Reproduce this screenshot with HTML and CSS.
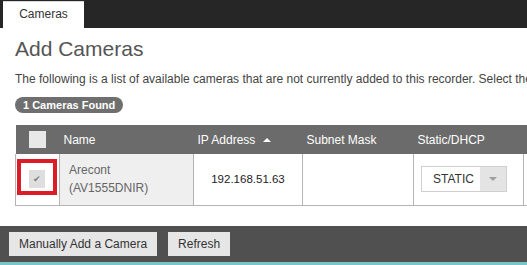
FILE: index.html
```html
<!DOCTYPE html>
<html lang="en">
  <head>
    <meta charset="UTF-8" />
    <meta name="viewport" content="width=device-width, initial-scale=1.0" />
    <title>Add Cameras</title>
    <link rel="stylesheet" href="styles.css">
  </head>
  <body>
    <div class="topbar">
      <div class="tab">Cameras</div>
    </div>

    <div class="content">
      <h1>Add Cameras</h1>
      <p class="intro">The following is a list of available cameras that are not currently added to this recorder. Select the</p>
      <span class="badge">1 Cameras Found</span>

      <div class="table-wrap">
        <table id="cameraTable">
          <thead>
            <tr>
              <th class="col-check"><span class="box"></span></th>
              <th class="col-name">Name</th>
              <th class="col-ip">IP Address <span class="sort-up"></span></th>
              <th class="col-mask">Subnet Mask</th>
              <th class="col-mode">Static/DHCP</th>
              <th class="col-extra"></th>
            </tr>
          </thead>
          <tbody>
            <tr>
              <td class="col-check">
                <span class="box checked">&#10004;</span>
                <span class="highlight"></span>
              </td>
              <td class="col-name name-cell">Arecont<br />(AV1555DNIR)</td>
              <td class="col-ip ip-cell">192.168.51.63</td>
              <td class="col-mask"></td>
              <td class="col-mode">
                <div class="select">
                  <span class="select-value">STATIC</span>
                  <span class="select-arrow"><span class="caret"></span></span>
                </div>
              </td>
              <td class="col-extra"></td>
            </tr>
          </tbody>
        </table>
      </div>
    </div>

    <div class="footer">
      <button class="btn">Manually Add a Camera</button>
      <button class="btn">Refresh</button>
    </div>
  </body>
</html>
```

FILE: styles.css
```css
body {
  margin: 0;
  width: 527px;
  height: 265px;
  overflow: hidden;
  font-family: "Liberation Sans", Arial, sans-serif;
  background-color: white;
}

/* Top tab bar */
.topbar {
  height: 28px;
  background-color: #262626;
  padding-left: 3px;
  display: flex;
  align-items: flex-end;
  box-sizing: border-box;
}
.tab {
  width: 81px;
  height: 27px;
  background-color: white;
  border-top: 1px solid #d8d8d8;
  box-sizing: border-box;
  color: #333;
  font-size: 12px;
  display: flex;
  align-items: center;
  justify-content: center;
  padding-bottom: 3px;
}

.content {
  padding-left: 15px;
}
h1 {
  margin: 9px 0 0;
  font-size: 21px;
  line-height: 24px;
  font-weight: normal;
  color: #555;
}
.intro {
  margin: 11px 0 0;
  font-size: 12px;
  line-height: 14px;
  color: #444;
  white-space: nowrap;
  overflow: hidden;
}
.badge {
  display: inline-block;
  margin-top: 11px;
  height: 16px;
  line-height: 16px;
  padding: 0 8px;
  border-radius: 8px;
  background-color: #6f6f6f;
  color: white;
  font-size: 11px;
  font-weight: bold;
}

/* Table */
.table-wrap {
  margin-top: 12px;
  overflow: hidden;
}
table {
  border-collapse: collapse;
  table-layout: fixed;
  width: 620px;
}
th,
td {
  box-sizing: border-box;
}
th {
  height: 29px;
  padding: 0 0 0 4px;
  background-color: #6b6b6b;
  color: white;
  font-size: 12px;
  font-weight: normal;
  text-align: left;
}
td {
  height: 51px;
  padding: 0;
  border-left: 1px solid #b4b4b4;
  border-bottom: 1px solid #b4b4b4;
  font-size: 12px;
  color: #222;
}
.col-check { width: 44px; }
.col-name { width: 134px; }
.col-ip { width: 109px; }
.col-mask { width: 111px; }
.col-mode { width: 110px; }

th.col-check {
  padding: 0;
  text-align: center;
}
td.col-check {
  position: relative;
  text-align: center;
}
.box {
  display: inline-block;
  width: 17px;
  height: 17px;
  background-color: #e8e8e8;
  vertical-align: middle;
}
.box.checked {
  width: 16px;
  height: 18px;
  background-color: #dedede;
  color: #808080;
  font-size: 9px;
  line-height: 18px;
  margin-left: -2px;
}
.highlight {
  position: absolute;
  left: 1px;
  top: 5px;
  width: 40px;
  height: 36px;
  border: 4px solid #dd1c2a;
  box-sizing: border-box;
}

.name-cell {
  background-color: #efefef;
  padding-left: 9px;
  color: #666;
  line-height: 18px;
}
.ip-cell {
  text-align: center;
  font-size: 11.5px;
}

.sort-up {
  display: inline-block;
  margin-left: 4px;
  border-left: 4px solid transparent;
  border-right: 4px solid transparent;
  border-bottom: 4px solid white;
  vertical-align: 2px;
}

.select {
  display: flex;
  width: 86px;
  height: 26px;
  margin-left: 7px;
  border: 1px solid #cfcfcf;
  box-sizing: border-box;
  background-color: white;
}
.select-value {
  flex: 1;
  padding-left: 11px;
  line-height: 24px;
  color: #333;
  font-size: 12px;
}
.select-arrow {
  width: 26px;
  background-color: #e4e4e4;
  display: flex;
  align-items: center;
  justify-content: center;
}
.caret {
  border-left: 4px solid transparent;
  border-right: 4px solid transparent;
  border-top: 4px solid #a0a0a0;
}

/* Footer buttons */
.footer {
  margin-top: 20px;
  height: 36px;
  background-color: #505050;
  border-bottom: 3px solid #7cc5c7;
  padding-left: 9px;
  display: flex;
  align-items: center;
  gap: 11px;
}
.btn {
  height: 24px;
  padding: 0 10px;
  border: none;
  background-color: #e6e6e6;
  color: #333;
  font-family: "Liberation Sans", Arial, sans-serif;
  font-size: 12px;
  cursor: pointer;
}
```
